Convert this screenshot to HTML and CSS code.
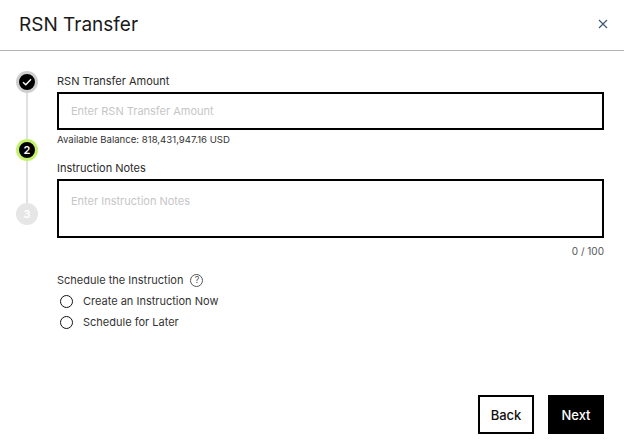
FILE: index.html
```html
<!DOCTYPE html>
<html lang="en">
<head>
<meta charset="utf-8">
<title>RSN Transfer</title>
<link rel="stylesheet" href="styles.css">
</head>
<body>
<div class="modal">
  <header class="modal-header">
    <h1 class="modal-title">RSN Transfer</h1>
    <button class="close-btn" aria-label="Close">
      <svg width="10" height="10" viewBox="0 0 10 10"><path d="M1 1 L9 9 M9 1 L1 9" stroke="#3c5a78" stroke-width="1.2" fill="none"/></svg>
    </button>
  </header>
  <div class="modal-body">
    <div class="stepper">
      <div class="step step-done">
        <svg width="10" height="8" viewBox="0 0 10 8"><path d="M1 4.2 L3.8 6.8 L9 1.2" stroke="#fff" stroke-width="1.4" fill="none"/></svg>
      </div>
      <div class="step-line line-a"></div>
      <div class="step step-active">2</div>
      <div class="step-line line-b"></div>
      <div class="step step-todo">3</div>
    </div>
    <div class="form">
      <label class="field-label">RSN Transfer Amount</label>
      <div class="input">Enter RSN Transfer Amount</div>
      <div class="hint">Available Balance: 818,431,947.16 USD</div>
      <label class="field-label notes-label">Instruction Notes</label>
      <div class="input textarea">Enter Instruction Notes</div>
      <div class="counter">0 / 100</div>
      <div class="schedule-label">Schedule the Instruction
        <span class="help">?</span>
      </div>
      <div class="radio-row"><span class="radio"></span>Create an Instruction Now</div>
      <div class="radio-row"><span class="radio"></span>Schedule for Later</div>
    </div>
  </div>
  <footer class="modal-footer">
    <button class="btn btn-back">Back</button>
    <button class="btn btn-next">Next</button>
  </footer>
</div>
</body>
</html>
```
FILE: styles.css
```css
* { box-sizing: border-box; }
html, body { margin: 0; padding: 0; background: #fff; }
body { font-family: Inter, "Noto Sans", sans-serif; color: #222; }
.modal { width: 624px; height: 446px; display: flex; flex-direction: column; }
.modal-header {
  height: 51px; border-bottom: 1px solid #b5b5b5;
  display: flex; align-items: center; justify-content: space-between;
  padding: 0 15px 2px 19px;
}
.modal-title { margin: 0; font-size: 19px; font-weight: 400; color: #1a1a1a; letter-spacing: 0; }
.close-btn { border: 0; background: none; padding: 0; width: 12px; height: 12px; display: flex; align-items: center; justify-content: center; }
.modal-body { display: flex; padding: 21px 20px 0 16px; flex: 1; }
.stepper { width: 41px; display: flex; flex-direction: column; align-items: flex-start; margin-top: -1px; }
.step {
  width: 22px; height: 22px; border-radius: 50%;
  display: flex; align-items: center; justify-content: center;
  font-size: 11px; font-weight: 600; color: #fff; flex: none;
}
.step-done { background: #000; border: 3px solid #cfcfcf; }
.step-active { background: #000; border: 3px solid #c3f26a; }
.step-todo { background: #e6e6e6; color: #fff; }
.step-line { width: 2px; background: #e0e0e0; margin-left: 10px; }
.line-a { height: 46px; }
.line-b { height: 42px; }
.form { flex: 1; display: flex; flex-direction: column; }
.field-label { font-size: 11px; color: #2a2a2a; line-height: 14px; margin-top: 2px; }
.input {
  margin-top: 4px; height: 38px; border: 2px solid #000;
  padding: 0 12px; display: flex; align-items: center;
  font-size: 11px; color: #c6c6c6;
}
.hint { font-size: 9.6px; color: #333; margin-top: 3px; line-height: 13px; }
.notes-label { margin-top: 15px; }
.textarea { height: 59px; align-items: flex-start; padding-top: 13px; }
.counter { align-self: flex-end; font-size: 10px; color: #555; margin-top: 7px; line-height: 13px; }
.schedule-label { font-size: 11px; color: #333; margin-top: 15px; display: flex; align-items: center; gap: 7px; line-height: 14px; }
.help {
  width: 13px; height: 13px; border: 1px solid #555; border-radius: 50%;
  font-size: 9px; display: inline-flex; align-items: center; justify-content: center; color: #555;
}
.radio-row { display: flex; align-items: center; font-size: 11px; color: #333; margin-top: 7px; padding-left: 3px; line-height: 14px; }
.radio-row + .radio-row { margin-top: 7px; }
.radio { width: 13px; height: 13px; border: 1.5px solid #111; border-radius: 50%; margin-right: 10px; flex: none; }
.modal-footer { display: flex; justify-content: flex-end; gap: 14px; padding: 0 20px 12px 0; }
.btn { width: 56px; height: 39px; font-family: inherit; font-size: 13px; font-weight: 500; cursor: pointer; }
.btn-back { background: #fff; border: 2px solid #000; color: #111; }
.btn-next { background: #000; border: 2px solid #000; color: #fff; }
```
